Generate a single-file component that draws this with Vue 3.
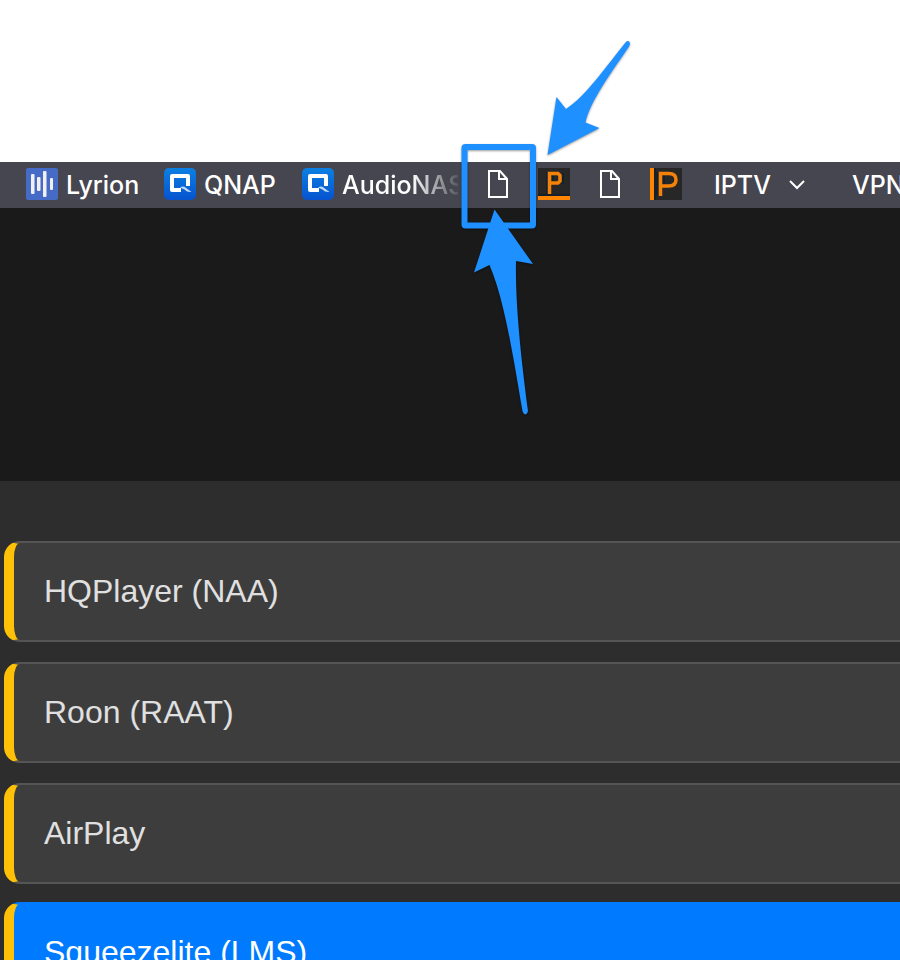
<template>
  <div class="page">
    <header class="browser-top">
      <nav class="bookmarks" aria-label="Bookmarks">
        <a
          v-for="(bookmark, index) in bookmarks"
          :key="index"
          class="bookmark"
          :class="bookmark.kind"
          href="#"
          :aria-label="bookmark.label || 'Bookmark'"
        >
          <svg v-if="bookmark.icon === 'lyrion'" class="icon" viewBox="0 0 32 32">
            <rect width="32" height="32" rx="2" fill="#466bc7" />
            <g fill="#f1efef">
              <rect x="5" y="6" width="3.500" height="20" rx="1" />
              <rect x="11" y="9" width="3.500" height="14" rx="1" />
              <rect x="17" y="3" width="3.500" height="26" rx="1" />
              <rect x="24" y="10" width="3" height="12" rx="1" />
            </g>
          </svg>
          <svg v-else-if="bookmark.icon === 'qnap'" class="icon" viewBox="0 0 32 32">
            <defs>
              <linearGradient :id="'qnap-' + index" x1="0" y1="0" x2="0" y2="1">
                <stop offset="0" stop-color="#0c80e2" />
                <stop offset="1" stop-color="#0653cf" />
              </linearGradient>
            </defs>
            <rect width="32" height="32" rx="5" :fill="`url(#qnap-${index})`" />
            <path d="M17 22H8V8h16v10" fill="none" stroke="#fff" stroke-width="4" stroke-linejoin="round" />
            <path d="M16 19.500q3-2 5.500 0l6 4.500q-4.500 .5-7-2.500z" fill="#fff" opacity=".75" />
          </svg>
          <svg v-else-if="bookmark.icon === 'page'" class="icon" viewBox="0 0 32 32">
            <path d="M7 3h11l7 8v18H7z" fill="none" stroke="#fff" stroke-width="2" />
            <path d="M17 3v8h8" fill="none" stroke="#fff" stroke-width="2" />
          </svg>
          <svg v-else-if="bookmark.icon === 'underlined'" class="icon" viewBox="0 0 32 32">
            <rect width="32" height="32" fill="#272727" />
            <rect y="26" width="32" height="2" fill="#14202c" />
            <rect y="28" width="32" height="4" fill="#ff8500" />
            <path d="M9 4v22M15 8v5M25 5v11" stroke="#14202c" stroke-width="2" />
            <path d="M11.500 26V5.500h8.500l2 2v5.500l-2 2H12" fill="none" stroke="#f58208" stroke-width="3.500" />
          </svg>
          <svg v-else-if="bookmark.icon === 'sidelined'" class="icon" viewBox="0 0 32 32">
            <rect width="32" height="32" fill="#272727" />
            <rect width="4" height="32" fill="#ff8500" />
            <rect x="4" width="2" height="32" fill="#14202c" />
            <path d="M7 4v24M14 8v8" stroke="#14202c" stroke-width="2" />
            <path d="M10.500 28V5.500h8q7.500 0 7.500 6.200t-7.500 6.300h-8" fill="none" stroke="#f58208" stroke-width="3.500" />
          </svg>
          <span v-if="bookmark.label" class="bookmark-label">{{ bookmark.label }}</span>
          <svg v-if="bookmark.kind === 'folder'" class="chevron" viewBox="0 0 24 24">
            <path d="M5 9l7 7 7-7" fill="none" stroke="#fff" stroke-width="2" />
          </svg>
        </a>
      </nav>
    </header>

    <section class="banner"></section>

    <main class="panel">
      <button
        v-for="player in players"
        :key="player"
        class="player"
        :class="{ active: player === selected }"
        type="button"
        @click="selected = player"
      >
        {{ player }}
      </button>
    </main>

    <svg class="annotations" width="900" height="440" viewBox="0 0 900 440" aria-hidden="true">
      <rect x="464.500" y="147" width="68.500" height="78.500" rx="1" fill="none" stroke="#1e90ff" stroke-width="6" />
      <path d="M547.500 155L556.500 97L566 109C586 96 608 64 625.500 42.500Q628 40 629.500 42Q630.500 44 629 46.500C613 70 590 101 585.500 122.500L599.500 128Z" />
      <path d="M494.500 209.500L533 264L516 261C515 310 523 372 528 411Q527 414.500 525 414.500Q523 414 522.500 411C514 362 505 301 489.500 265L474 272.500Z" />
    </svg>
  </div>
</template>

<script setup>
import { ref } from "vue";

const bookmarks = [
  { icon: "lyrion", label: "Lyrion", kind: "site" },
  { icon: "qnap", label: "QNAP", kind: "site" },
  { icon: "qnap", label: "AudioNAS", kind: "site-long" },
  { icon: "page", kind: "icon-only" },
  { icon: "underlined", kind: "icon-only" },
  { icon: "page", kind: "icon-only" },
  { icon: "sidelined", kind: "icon-only" },
  { label: "IPTV", kind: "folder" },
  { label: "VPN", kind: "folder" },
];

const players = ["HQPlayer (NAA)", "Roon (RAAT)", "AirPlay", "Squeezelite (LMS)"];

const selected = ref("Squeezelite (LMS)");
</script>

<style>
body {
  margin: 0;
  background: #2d2d2d;
}
</style>

<style scoped>
.page {
  position: relative;
  height: 100vh;
  overflow: hidden;
  font-family: "Liberation Sans", Arial, sans-serif;
}

.browser-top {
  padding-top: 162px;
  background: #fff;
}

.bookmarks {
  display: flex;
  align-items: center;
  gap: 24px;
  box-sizing: border-box;
  height: 46px;
  padding: 0 0 2px 26px;
  background: #464650;
  overflow: hidden;
}

.bookmark {
  display: flex;
  flex-shrink: 0;
  align-items: center;
  gap: 8px;
  box-sizing: border-box;
  color: #fff;
  font-family: Inter, sans-serif;
  font-size: 25px;
  font-weight: 500;
  line-height: 32px;
  text-decoration: none;
  white-space: nowrap;
}

.bookmark-label {
  padding-top: 2px;
}

.icon {
  display: block;
  flex-shrink: 0;
  width: 32px;
  height: 32px;
}

.site {
  width: 114px;
}

.site-long {
  width: 156px;
}

/* Long names fade out instead of wrapping */
.site-long .bookmark-label {
  width: 116px;
  overflow: hidden;
  mask-image: linear-gradient(to right, #000 60%, transparent 104%);
}

.folder {
  gap: 14px;
  width: 114px;
  padding-left: 8px;
}

.chevron {
  width: 24px;
  height: 24px;
}

.banner {
  height: 273px;
  background: #1a1a1a;
}

.panel {
  display: flex;
  flex-direction: column;
  gap: 20px;
  padding: 60px 0 60px 4px;
  background: #2d2d2d;
}

.player {
  padding: 30px;
  border: 2px solid #555;
  border-right: 0;
  border-left: 10px solid #ffc107;
  border-radius: 16px 0 0 16px;
  background: #3d3d3d;
  color: #e0e0e0;
  font-family: inherit;
  font-size: 32px;
  line-height: 37px;
  text-align: left;
  cursor: pointer;
}

.player.active {
  border-color: #007bff;
  border-left-color: #ffc107;
  background: #007bff;
  color: #fff;
  transform: translateY(-2px);
}

.annotations {
  position: absolute;
  top: 0;
  left: 0;
  fill: #1e90ff;
  filter: drop-shadow(0 1px 1px rgba(0, 0, 0, 0.4));
  pointer-events: none;
}
</style>
